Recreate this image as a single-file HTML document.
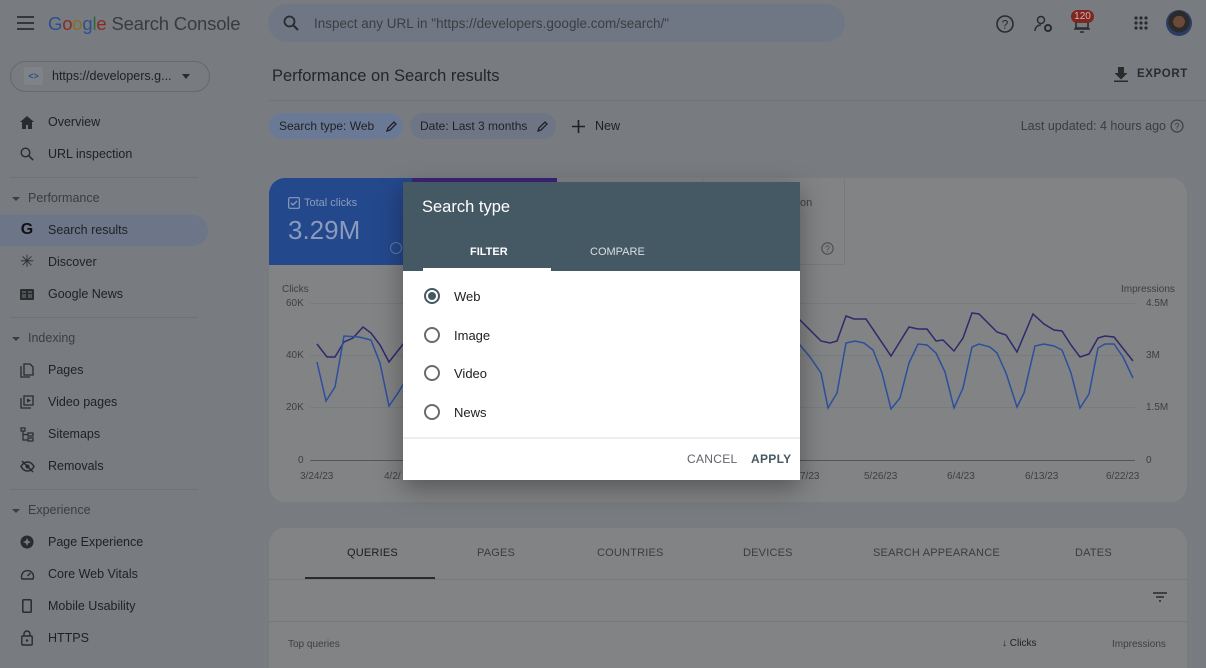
<!DOCTYPE html>
<html><head><meta charset="utf-8">
<style>
*{box-sizing:border-box;margin:0;padding:0}
body{width:1206px;height:661px;overflow:hidden;background:#787c80;font-family:"Liberation Sans",Arial,sans-serif;color:#1c1d1f;position:relative}
.a{position:absolute;white-space:nowrap}
.nav{position:absolute;left:0;height:32px;display:flex;align-items:center;font-size:12.5px;color:#202124;width:208px}
.nav .ic{width:48px;display:flex;justify-content:center;padding-left:6px}
.sec{position:absolute;left:12px;font-size:12.5px;color:#3b3d40}
.sec:before{content:"";display:inline-block;border:4px solid transparent;border-top:4px solid #3b3d40;margin-right:8px;vertical-align:middle;margin-top:4px}
.hr{position:absolute;left:10px;width:188px;height:1px;background:#6e7175}
.chip{position:absolute;top:113px;height:26px;border-radius:13px;font-size:12px;display:flex;align-items:center;padding-left:10px;color:#1f2022;white-space:nowrap}
.ax{position:absolute;font-size:10px;color:#3d3f42;white-space:nowrap}
.tab{position:absolute;top:547px;font-size:11px;color:#3a3c3f;letter-spacing:.2px}
.radio{position:absolute;left:424px;width:16px;height:16px;border:2px solid #6b6b6b;border-radius:50%}
.rl{position:absolute;left:454px;font-size:13px;color:#202124}
</style></head><body>
<svg class="a" style="left:17px;top:16px" width="18" height="14"><path d="M0 1h17M0 7h17M0 13h17" stroke="#2b2c2e" stroke-width="1.8"/></svg>
<div class="a" style="left:48px;top:13px;font-size:18.5px;letter-spacing:-.2px"><span style="color:#2d4f8e">G</span><span style="color:#8a2b22">o</span><span style="color:#8b6f1a">o</span><span style="color:#2d4f8e">g</span><span style="color:#2b6a3c">l</span><span style="color:#8a2b22">e</span> <span style="color:#3a3b3d">Search Console</span></div>
<div class="a" style="left:268px;top:4px;width:577px;height:38px;border-radius:19px;background:#6f7785"></div>
<svg class="a" style="left:283px;top:15px" width="16" height="16"><circle cx="6.5" cy="6.5" r="5" fill="none" stroke="#2a2b2d" stroke-width="1.8"/><path d="M10 10l5 5" stroke="#2a2b2d" stroke-width="2"/></svg>
<div class="a" style="left:314px;top:16px;font-size:13.5px;color:#3b3e43">Inspect any URL in "https://developers.google.com/search/"</div>
<svg class="a" style="left:995px;top:14px" width="20" height="20"><circle cx="10" cy="10" r="8" fill="none" stroke="#2a2b2d" stroke-width="1.6"/><text x="10" y="14.5" font-size="12" text-anchor="middle" fill="#2a2b2d" font-family="Liberation Sans">?</text></svg>
<svg class="a" style="left:1034px;top:14px" width="20" height="20"><circle cx="7" cy="6" r="3.5" fill="none" stroke="#2a2b2d" stroke-width="1.5"/><path d="M1 17c0-4 3-6 6-6" fill="none" stroke="#2a2b2d" stroke-width="1.5"/><circle cx="14" cy="14" r="3" fill="none" stroke="#2a2b2d" stroke-width="2"/></svg>
<svg class="a" style="left:1073px;top:14px" width="18" height="20"><path d="M3 4h12v10H3zM1 15h16M7 18h4" fill="none" stroke="#2a2b2d" stroke-width="1.6"/></svg>
<div class="a" style="left:1071px;top:10px;width:23px;height:13px;border-radius:7px;background:#7e2620;color:#d7b3b0;font-size:10px;text-align:center;line-height:13px">120</div>
<svg class="a" style="left:1134px;top:16px" width="14" height="14" fill="#2a2b2d"><circle cx="2" cy="2" r="1.6"/><circle cx="7" cy="2" r="1.6"/><circle cx="12" cy="2" r="1.6"/><circle cx="2" cy="7" r="1.6"/><circle cx="7" cy="7" r="1.6"/><circle cx="12" cy="7" r="1.6"/><circle cx="2" cy="12" r="1.6"/><circle cx="7" cy="12" r="1.6"/><circle cx="12" cy="12" r="1.6"/></svg>
<div class="a" style="left:1166px;top:10px;width:26px;height:26px;border-radius:50%;background:radial-gradient(circle at 50% 45%,#6b4a3a 0 30%,#2d2a2a 31% 55%,#2a3d63 56%)"></div>

<div class="a" style="left:10px;top:61px;width:200px;height:31px;border:1px solid #65686c;border-radius:16px"></div>
<div class="a" style="left:24px;top:67px;width:19px;height:18px;background:#7f8286;border-radius:2px;font-size:9px;text-align:center;line-height:18px;color:#2d4f8e;font-weight:bold">&lt;&gt;</div>
<div class="a" style="left:52px;top:69px;font-size:12.5px;color:#202124">https://developers.g...</div>
<div class="a" style="left:182px;top:74px;border:4px solid transparent;border-top:5px solid #2a2b2d"></div>

<div class="nav" style="top:106px"><span class="ic"><svg width="14" height="13"><path d="M7 0L0 6h2v7h4V9h2v4h4V6h2z" fill="#2a2b2d"/></svg></span>Overview</div>
<div class="nav" style="top:138px"><span class="ic"><svg width="14" height="14"><circle cx="5.5" cy="5.5" r="4.3" fill="none" stroke="#2a2b2d" stroke-width="1.4"/><path d="M8.6 8.6l4.5 4.5" stroke="#2a2b2d" stroke-width="1.6"/></svg></span>URL inspection</div>
<div class="hr" style="top:177px"></div>
<div class="sec" style="top:191px">Performance</div>
<div class="a" style="left:0;top:215px;width:208px;height:31px;background:#6c7688;border-radius:0 16px 16px 0"></div>
<div class="nav" style="top:214px"><span class="ic" style="font-weight:bold;font-size:16px;color:#111">G</span>Search results</div>
<div class="nav" style="top:246px"><span class="ic" style="font-size:17px;color:#2a2b2d">✳</span>Discover</div>
<div class="nav" style="top:278px"><span class="ic"><svg width="14" height="11"><rect width="14" height="11" rx="1" fill="#2a2b2d"/><path d="M2 3h4M2 6h4M2 8h4M8 3h4M8 6h4M8 8h4" stroke="#787c80" stroke-width="1"/></svg></span>Google News</div>
<div class="hr" style="top:317px"></div>
<div class="sec" style="top:331px">Indexing</div>
<div class="nav" style="top:354px"><span class="ic"><svg width="14" height="15"><path d="M1 3v11h9M4 1h6l3 3v8H4z" fill="none" stroke="#2a2b2d" stroke-width="1.3"/></svg></span>Pages</div>
<div class="nav" style="top:386px"><span class="ic"><svg width="14" height="14"><path d="M1 3v10h10M4 1h9v9H4z" fill="none" stroke="#2a2b2d" stroke-width="1.3"/><path d="M7 3.5l4 2-4 2z" fill="#2a2b2d"/></svg></span>Video pages</div>
<div class="nav" style="top:418px"><span class="ic"><svg width="14" height="15"><path d="M1 1h4v3H1zM8 6h5v3H8zM8 11h5v3H8zM3 4v9h5M3 7.5h5" fill="none" stroke="#2a2b2d" stroke-width="1.2"/></svg></span>Sitemaps</div>
<div class="nav" style="top:450px"><span class="ic"><svg width="15" height="13"><path d="M1 6.5C3 3 5 2 7.5 2S12 3 14 6.5C12 10 10 11 7.5 11S3 10 1 6.5z" fill="none" stroke="#2a2b2d" stroke-width="1.5"/><circle cx="7.5" cy="6.5" r="2" fill="#2a2b2d"/><path d="M2 1l11 11" stroke="#2a2b2d" stroke-width="1.5"/></svg></span>Removals</div>
<div class="hr" style="top:489px"></div>
<div class="sec" style="top:503px">Experience</div>
<div class="nav" style="top:526px"><span class="ic"><svg width="14" height="14"><circle cx="7" cy="7" r="6.5" fill="#2a2b2d"/><path d="M7 3l1.2 2.8L11 7 8.2 8.2 7 11 5.8 8.2 3 7l2.8-1.2z" fill="#787c80"/></svg></span>Page Experience</div>
<div class="nav" style="top:558px"><span class="ic"><svg width="15" height="12"><path d="M2 11A6 6 0 1 1 13 11z" fill="none" stroke="#2a2b2d" stroke-width="1.4"/><path d="M7.5 8l3-3" stroke="#2a2b2d" stroke-width="1.4"/></svg></span>Core Web Vitals</div>
<div class="nav" style="top:590px"><span class="ic"><svg width="10" height="14"><rect x=".8" y=".8" width="8.4" height="12.4" rx="1" fill="none" stroke="#2a2b2d" stroke-width="1.5"/></svg></span>Mobile Usability</div>
<div class="nav" style="top:622px"><span class="ic"><svg width="12" height="16"><path d="M3 6V4a3 3 0 0 1 6 0v2" fill="none" stroke="#2a2b2d" stroke-width="1.4"/><rect x=".8" y="6" width="10.4" height="9" rx="1" fill="none" stroke="#2a2b2d" stroke-width="1.4"/><circle cx="6" cy="10.5" r="1.2" fill="#2a2b2d"/></svg></span>HTTPS</div>

<div class="a" style="left:272px;top:67px;font-size:16.5px;color:#252628">Performance on Search results</div>
<svg class="a" style="left:1114px;top:67px" width="14" height="15"><path d="M4 0h6v6h3.5L7 12.5.5 6H4z M0 13.5h14v1.5H0z" fill="#2a2b2d"/></svg>
<div class="a" style="left:1137px;top:68px;font-size:11.5px;font-weight:bold;color:#2a2b2d;letter-spacing:.6px">EXPORT</div>
<div class="a" style="left:269px;top:100px;width:937px;height:1px;background:#6e7175"></div>
<div class="chip" style="left:269px;width:134px;background:#6a7a96">Search type: Web<svg style="margin-left:12px" width="11" height="11"><path d="M1 10l1-3 6-6 2 2-6 6z" fill="none" stroke="#1f2022" stroke-width="1.3"/></svg></div>
<div class="chip" style="left:410px;width:146px;background:#6e7686">Date: Last 3 months<svg style="margin-left:10px" width="11" height="11"><path d="M1 10l1-3 6-6 2 2-6 6z" fill="none" stroke="#1f2022" stroke-width="1.3"/></svg></div>
<svg class="a" style="left:572px;top:120px" width="13" height="13"><path d="M6.5 0v13M0 6.5h13" stroke="#1f2022" stroke-width="1.6"/></svg>
<div class="a" style="left:595px;top:119px;font-size:12.5px;color:#1f2022">New</div>
<div class="a" style="left:1000px;width:166px;text-align:right;top:119px;font-size:12.5px;color:#3b3d40">Last updated: 4 hours ago</div>
<svg class="a" style="left:1170px;top:119px" width="14" height="14"><circle cx="7" cy="7" r="6" fill="none" stroke="#3b3d40" stroke-width="1.2"/><text x="7" y="10.5" font-size="9" text-anchor="middle" fill="#3b3d40" font-family="Liberation Sans">?</text></svg>

<div class="a" style="left:269px;top:178px;width:918px;height:324px;background:#828384;border-radius:16px;overflow:hidden">
  <div class="a" style="left:0;top:0;width:143px;height:87px;background:#24488c"></div>
  <div class="a" style="left:143px;top:0;width:145px;height:87px;background:#3c2377"></div>
  <div class="a" style="left:433px;top:0;width:143px;height:87px;border:1px solid #77797b;border-top:none"></div>
</div>
<svg class="a" style="left:288px;top:197px" width="12" height="12"><rect x=".7" y=".7" width="10.6" height="10.6" rx="1" fill="none" stroke="#8a9bbd" stroke-width="1.2"/><path d="M3 6l2 2 4-4" fill="none" stroke="#8a9bbd" stroke-width="1.3"/></svg>
<div class="a" style="left:304px;top:197px;font-size:11px;color:#8a9bbd">Total clicks</div>
<div class="a" style="left:288px;top:215px;font-size:26px;color:#8a9bbd">3.29M</div>
<div class="a" style="left:390px;top:242px;width:12px;height:12px;border:1px solid #5f76a3;border-radius:50%"></div>
<div class="a" style="left:800px;top:197px;font-size:11px;color:#3d3f42">on</div>
<svg class="a" style="left:821px;top:242px" width="13" height="13"><circle cx="6.5" cy="6.5" r="5.7" fill="none" stroke="#4b4d50" stroke-width="1.1"/><text x="6.5" y="10" font-size="9" text-anchor="middle" fill="#4b4d50" font-family="Liberation Sans">?</text></svg>

<div class="ax" style="left:282px;top:284px">Clicks</div>
<div class="ax" style="left:1121px;top:284px">Impressions</div>
<div class="ax" style="left:286px;top:298px">60K</div>
<div class="ax" style="left:286px;top:350px">40K</div>
<div class="ax" style="left:286px;top:402px">20K</div>
<div class="ax" style="left:298px;top:455px">0</div>
<div class="ax" style="left:1146px;top:298px">4.5M</div>
<div class="ax" style="left:1146px;top:350px">3M</div>
<div class="ax" style="left:1146px;top:402px">1.5M</div>
<div class="ax" style="left:1146px;top:455px">0</div>
<svg class="a" style="left:0;top:0" width="1206" height="661">
<g stroke="#7a7b7d" stroke-width="1"><path d="M310 303.5H1135M310 355.5H1135M310 407.5H1135"/></g>
<path d="M310 460.5H1135" stroke="#545658" stroke-width="1"/>
<polyline fill="none" stroke="#2e2a6b" stroke-width="1.5" points="317,344 327,357 335,357 344,342 353,338 363,327 371,333 380,345 389,362 404,343 800,320 821,341 830,343 837,341 846,316 854,319 866,319 891,356 909,327 918,329 927,329 936,341 943,340 954,351 963,338 972,313 979,314 997,332 1006,335 1017,352 1033,314 1044,324 1054,330 1062,331 1071,345 1080,357 1089,354 1098,338 1105,336 1114,337 1133,361"/>
<polyline fill="none" stroke="#2c4f9c" stroke-width="1.5" points="317,362 326,401 335,387 344,336 359,337 371,340 380,363 389,406 398,393 404,383 800,345 810,357 821,373 828,408 837,393 846,343 855,341 864,343 873,350 882,373 891,409 900,398 909,363 918,344 927,345 936,353 945,372 954,408 963,388 972,347 979,344 990,347 997,353 1006,373 1017,407 1024,393 1035,346 1044,344 1054,346 1062,350 1071,373 1080,408 1089,394 1098,348 1105,344 1114,344 1123,357 1133,378"/>
</svg>
<div class="ax" style="left:300px;top:471px">3/24/23</div>
<div class="ax" style="left:384px;top:471px">4/2/</div>
<div class="ax" style="left:800px;top:471px">7/23</div>
<div class="ax" style="left:864px;top:471px">5/26/23</div>
<div class="ax" style="left:947px;top:471px">6/4/23</div>
<div class="ax" style="left:1025px;top:471px">6/13/23</div>
<div class="ax" style="left:1106px;top:471px">6/22/23</div>

<div class="a" style="left:269px;top:528px;width:918px;height:140px;background:#828384;border-radius:16px 16px 0 0"></div>
<div class="tab" style="left:347px;color:#1c1d1f">QUERIES</div>
<div class="a" style="left:305px;top:577px;width:130px;height:2px;background:#2a2b2d"></div>
<div class="tab" style="left:477px">PAGES</div>
<div class="tab" style="left:597px">COUNTRIES</div>
<div class="tab" style="left:743px">DEVICES</div>
<div class="tab" style="left:873px">SEARCH APPEARANCE</div>
<div class="tab" style="left:1075px">DATES</div>
<div class="a" style="left:269px;top:579px;width:918px;height:1px;background:#76787a"></div>
<svg class="a" style="left:1153px;top:592px" width="14" height="11"><path d="M0 1h14M3 5h8M6 9h2" stroke="#2a2b2d" stroke-width="1.6"/></svg>
<div class="a" style="left:269px;top:621px;width:918px;height:1px;background:#76787a"></div>
<div class="a" style="left:288px;top:639px;font-size:10px;color:#3d3f42">Top queries</div>
<div class="a" style="left:1002px;top:638px;font-size:10px;color:#1f2022">&#8595; Clicks</div>
<div class="a" style="left:1112px;top:639px;font-size:10px;color:#3d3f42">Impressions</div>

<div class="a" style="left:403px;top:182px;width:397px;height:298px;background:#fff;box-shadow:0 8px 24px rgba(0,0,0,.35);overflow:hidden">
  <div class="a" style="left:0;top:0;width:397px;height:89px;background:#455964"></div>
  <div class="a" style="left:19px;top:16px;font-size:16.5px;color:#fff">Search type</div>
  <div class="a" style="left:67px;top:64px;font-size:11px;font-weight:bold;color:#fff">FILTER</div>
  <div class="a" style="left:187px;top:64px;font-size:11px;color:#d9dfe2">COMPARE</div>
  <div class="a" style="left:20px;top:86px;width:128px;height:3px;background:#fff"></div>
  <div class="a" style="left:0;top:255px;width:397px;height:2px;background:#eeeeee"></div>
  <div class="a" style="left:284px;top:270px;font-size:12px;color:#5f6368;letter-spacing:.3px">CANCEL</div>
  <div class="a" style="left:348px;top:270px;font-size:12px;color:#455964;letter-spacing:.3px;font-weight:bold">APPLY</div>
</div>
<div class="radio" style="top:288px;border-color:#455964"><div style="width:8px;height:8px;margin:2px;border-radius:50%;background:#455964"></div></div>
<div class="rl" style="top:289px">Web</div>
<div class="radio" style="top:327px"></div><div class="rl" style="top:328px">Image</div>
<div class="radio" style="top:365px"></div><div class="rl" style="top:366px">Video</div>
<div class="radio" style="top:404px"></div><div class="rl" style="top:405px">News</div>
</body></html>
